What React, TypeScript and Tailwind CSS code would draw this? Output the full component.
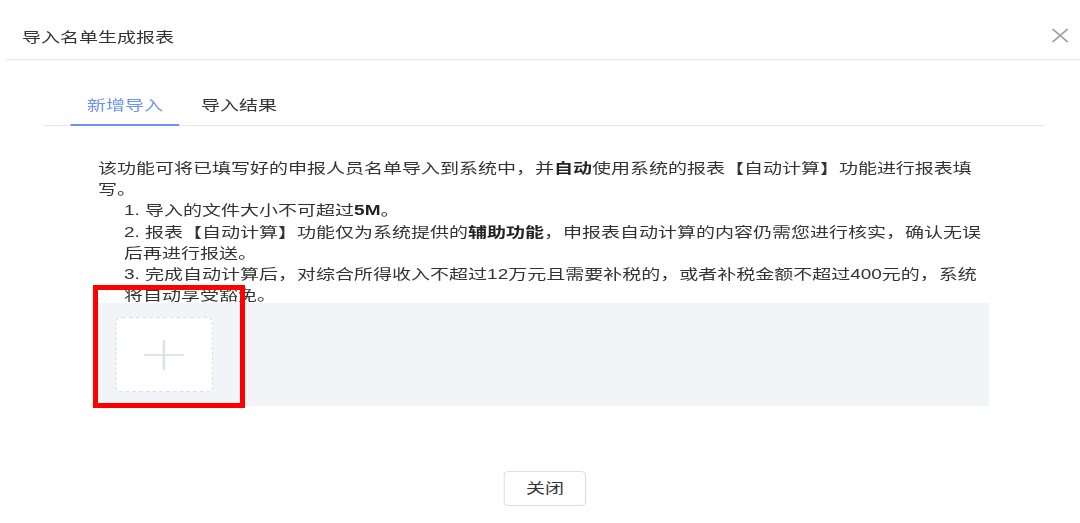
import React from "react";

const font = {
  fontFamily: '"Liberation Sans", "Noto Sans CJK SC", sans-serif',
};

export default function App() {
  return (
    <div className="relative w-[1080px] h-[523px] bg-white overflow-hidden" style={font}>
      <div className="w-[796px] h-[523px] origin-left scale-x-[1.357] text-[#333333] text-[14px]">
        {/* header */}
        <div className="ml-[3.7px] h-[60px] border-b border-[#e8e8e8] flex items-center justify-between pl-[12.5px] pr-[8.5px] pt-[16px]">
          <div className="text-[14px] text-[#333333]">导入名单生成报表</div>
          <svg width="12.5" height="15" viewBox="0 0 12.5 15" className="-mt-[4px]" preserveAspectRatio="none">
            <path d="M0.7 1 L11.8 14 M11.8 1 L0.7 14" stroke="#9a9a9a" strokeWidth="1.2" fill="none" />
          </svg>
        </div>

        {/* tabs */}
        <div className="ml-[31.7px] mr-[25.8px] mt-[26px] h-[40px] border-b border-[#e6e8ec] flex pl-[20.6px]">
          <div className="relative px-[11.8px] flex items-center text-[#6b93f2]">
            新增导入
            <div className="absolute left-0 right-0 -bottom-[1px] h-[2px] bg-[#6b93f2]" />
          </div>
          <div className="ml-[4.4px] px-[11.8px] flex items-center text-[#333333]">导入结果</div>
        </div>

        {/* body */}
        <div className="ml-[72.2px] w-[657.3px] mt-[32px] leading-[21.2px] text-[#333333]">
          <div className="whitespace-nowrap">
            该功能可将已填写好的申报人员名单导入到系统中，并<b className="font-bold text-[#222]">自动</b>使用系统的报表【自动计算】功能进行报表填
          </div>
          <div>写。</div>
          <div className="pl-[19.2px]">
            <div className="whitespace-nowrap">
              1. 导入的文件大小不可超过<b className="font-bold text-[#222]">5M</b>。
            </div>
            <div className="whitespace-nowrap">
              2. 报表【自动计算】功能仅为系统提供的<b className="font-bold text-[#222]">辅助功能</b>，申报表自动计算的内容仍需您进行核实，确认无误
            </div>
            <div>后再进行报送。</div>
            <div className="whitespace-nowrap">
              3. 完成自动计算后，对综合所得收入不超过12万元且需要补税的，或者补税金额不超过400元的，系统
            </div>
            <div>将自动享受豁免。</div>
          </div>

          {/* upload area */}
          <div className="-mt-[3px] h-[103px] bg-[#f3f4f8] pl-[13.3px] pt-[14px]">
            <div className="w-[71.5px] h-[75px] bg-white border border-dashed border-[#dcdfe6] rounded-[5px] flex items-center justify-center">
              <svg width="29.5" height="32" viewBox="0 0 29.5 32" preserveAspectRatio="none">
                <path d="M0 16 H29.5 M14.75 1 V31" stroke="#dfe2e8" strokeWidth="2" fill="none" />
              </svg>
            </div>
          </div>
        </div>

        {/* footer */}
        <div className="mt-[65px] flex justify-center pl-[7.4px]">
          <button className="w-[61.2px] h-[35px] border border-[#dcdfe6] rounded-[4px] bg-white text-[#333] text-[14px] flex items-center justify-center">
            关闭
          </button>
        </div>
      </div>

      {/* red annotation */}
      <div className="absolute left-[93px] top-[285px] w-[152px] h-[123px] border-[5px] border-[#ff0000] pointer-events-none" />
    </div>
  );
}
